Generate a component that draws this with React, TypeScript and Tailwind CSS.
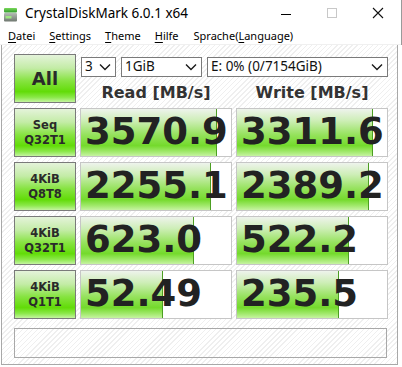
import React from "react";

const rows = [
  { a: "Seq", b: "Q32T1", read: "3570.9", readW: 136, write: "3311.6", writeW: 136 },
  { a: "4KiB", b: "Q8T8", read: "2255.1", readW: 130, write: "2389.2", writeW: 132 },
  { a: "4KiB", b: "Q32T1", read: "623.0", readW: 113, write: "522.2", writeW: 112 },
  { a: "4KiB", b: "Q1T1", read: "52.49", readW: 82, write: "235.5", writeW: 102 },
];

const ui = "font-['Noto_Sans','Open_Sans',sans-serif]";
const num = "font-['DejaVu_Sans','Verdana',sans-serif]";

const greenBtn =
  "border border-[#7a7a7a] bg-[linear-gradient(to_bottom,#e4f3da_0%,#c3eca6_28%,#86e340_55%,#62dc08_78%,#8ae848_90%,#c4f4a0_100%)]";

const barFill =
  "bg-[linear-gradient(to_bottom,#eef3ec_0%,#cdeeb6_25%,#95e25c_55%,#74da2c_78%,#9ee868_90%,#c6f3a2_100%)]";

const Chevron = () => (
  <svg width="12" height="8" viewBox="0 0 12 8" className="shrink-0">
    <polyline points="1,1.5 6,6.5 11,1.5" fill="none" stroke="#1a1a1a" strokeWidth="1.4" />
  </svg>
);

const Select = ({ label, w }: { label: string; w: string }) => (
  <div className={`${w} h-[20px] border border-[#7a7a7a] bg-white flex items-center justify-between pl-[3px] pr-[4px] text-[13.5px] leading-none text-[#111] ${ui}`}>
    <span>{label}</span>
    <Chevron />
  </div>
);

const ValueBox = ({ value, fill }: { value: string; fill: number }) => (
  <div className="relative w-[152px] h-[49px] border border-[#c6c6c6] bg-white overflow-hidden">
    <div
      className={`absolute left-0 top-0 bottom-0 border-r border-[#4c9e22] ${barFill}`}
      style={{ width: fill }}
    />
    <div className={`relative h-full flex items-center pl-[4px] pb-[2px] text-[37px] leading-none font-bold text-[#222] ${num}`}>
      {value}
    </div>
  </div>
);

const DiskIcon = () => (
  <svg width="16" height="16" viewBox="0 0 16 16">
    <defs>
      <linearGradient id="tg" x1="0" y1="0" x2="0" y2="1">
        <stop offset="0" stopColor="#7ad85a" />
        <stop offset="1" stopColor="#2f9a2a" />
      </linearGradient>
      <linearGradient id="bg" x1="0" y1="0" x2="0" y2="1">
        <stop offset="0" stopColor="#b4bcb4" />
        <stop offset="1" stopColor="#6f7870" />
      </linearGradient>
    </defs>
    <rect x="1" y="1" width="13" height="4.5" rx="1" fill="url(#tg)" />
    <rect x="1" y="6" width="13" height="8.5" rx="1" fill="url(#bg)" />
    <rect x="2.5" y="9" width="6" height="2.5" fill="#9ee882" />
  </svg>
);

export default function App() {
  const hatch =
    "bg-[image:repeating-linear-gradient(135deg,#ffffff_0px,#ffffff_2.6px,#efefef_2.6px,#efefef_3.6px)]";

  return (
    <div className={`w-[402px] h-[367px] bg-white flex flex-col overflow-hidden ${ui}`}>
      <div className="h-[45px] border-r border-[#9a9a9a] flex flex-col">
        {/* title bar */}
        <div className="h-[29px] flex items-center text-[13.5px] text-black">
          <div className="pl-[3px] pr-[6px] pt-[1px]">
            <DiskIcon />
          </div>
          <span className="pb-[3px]">CrystalDiskMark 6.0.1 x64</span>
          <div className="ml-auto flex items-center h-full">
            <div className="w-[46px] h-full flex items-center justify-center">
              <div className="w-[10px] h-px bg-black" />
            </div>
            <div className="w-[46px] h-full flex items-center justify-center">
              <div className="w-[10px] h-[10px] border border-[#c8c8c8] mb-[3px]" />
            </div>
            <div className="w-[46px] h-full flex items-center justify-center">
              <svg width="12" height="12" viewBox="0 0 12 12" className="mb-[3px]">
                <path d="M1 1 L11 11 M11 1 L1 11" stroke="#111" strokeWidth="1.1" />
              </svg>
            </div>
          </div>
        </div>
        {/* menu bar */}
        <div className="h-[16px] flex items-start text-[11px] leading-[14px] text-black border-b border-[#f0f0f0]">
          <span className="ml-[8px]"><u className="underline-offset-2">D</u>atei</span>
          <span className="ml-[14px]"><u className="underline-offset-2">S</u>ettings</span>
          <span className="ml-[14px]"><u className="underline-offset-2">T</u>heme</span>
          <span className="ml-[14px]"><u className="underline-offset-2">H</u>ilfe</span>
          <span className="ml-[15px]">Sprache(<u className="underline-offset-2">L</u>anguage)</span>
        </div>
      </div>

      {/* client area */}
      <div className={`ml-[1px] w-[397px] h-[320px] border-l border-r border-b border-[#a8a8a8] ${hatch} pl-[12px] pt-[9px]`}>
        <div className="flex gap-[4px] h-[49px]">
          <div className={`w-[62px] h-[49px] ${greenBtn} flex items-center justify-center text-[18px] font-bold text-[#2a2a2a] ${num}`}>
            All
          </div>
          <div className="flex flex-col">
            <div className="flex gap-[5px] mt-[3px] ml-[1px]">
              <Select label="3" w="w-[35px]" />
              <Select label="1GiB" w="w-[81px]" />
              <Select label="E: 0% (0/7154GiB)" w="w-[181px]" />
            </div>
            <div className={`flex gap-[4px] pt-[6px] text-[16px] leading-[20px] font-bold text-[#333] ${num}`}>
              <div className="w-[152px] text-center">Read [MB/s]</div>
              <div className="w-[152px] text-center">Write [MB/s]</div>
            </div>
          </div>
        </div>

        <div className="flex flex-col gap-[5px] mt-[5px]">
          {rows.map((r, i) => (
            <div key={i} className="flex gap-[4px]">
              <div className={`w-[62px] h-[49px] ${greenBtn} flex flex-col items-center justify-center text-[11.5px] leading-[15px] font-bold text-[#2a2a2a] ${num}`}>
                <span>{r.a}</span>
                <span>{r.b}</span>
              </div>
              <ValueBox value={r.read} fill={r.readW} />
              <ValueBox value={r.write} fill={r.writeW} />
            </div>
          ))}
        </div>

        <div className="mt-[9px] w-[373px] h-[30px] border border-[#a8a8a8]" />
      </div>
    </div>
  );
}
